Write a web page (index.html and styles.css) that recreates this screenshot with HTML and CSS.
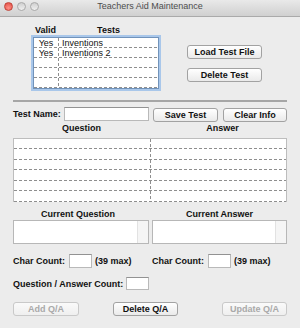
FILE: index.html
```html
<!DOCTYPE html>
<html lang="en">
<head>
  <meta charset="UTF-8" />
  <title>Teachers Aid Maintenance</title>
  <link rel="stylesheet" href="styles.css">
</head>
<body>
  <div class="window">
    <div class="titlebar">
      <div class="lights">
        <span class="light red"></span>
        <span class="light"></span>
        <span class="light"></span>
      </div>
      <div class="title">Teachers Aid Maintenance</div>
      <div></div>
    </div>

    <!-- test list + file buttons -->
    <div class="top">
      <div class="tests">
        <div class="tests-head">
          <span class="head-valid">Valid</span>
          <span class="head-test">Tests</span>
        </div>
        <div class="tests-table">
          <div class="trow"><span class="cell-valid">Yes</span><span class="cell-test">Inventions</span></div>
          <div class="trow"><span class="cell-valid">Yes</span><span class="cell-test">Inventions 2</span></div>
          <div class="trow"><span class="cell-valid"></span><span class="cell-test"></span></div>
          <div class="trow"><span class="cell-valid"></span><span class="cell-test"></span></div>
          <div class="trow"><span class="cell-valid"></span><span class="cell-test"></span></div>
        </div>
      </div>
      <div class="test-buttons">
        <button class="btn">Load Test File</button>
        <button class="btn">Delete Test</button>
      </div>
    </div>

    <div class="separator"></div>

    <div class="lower">
      <div class="name-row">
        <label class="name-label">Test Name:</label>
        <input type="text" class="field name-field" />
        <button class="btn save-btn">Save Test</button>
        <button class="btn clear-btn">Clear Info</button>
      </div>

      <div class="qa-head">
        <span>Question</span>
        <span class="answer-head">Answer</span>
      </div>
      <div class="qa-grid">
        <div class="qa-row"><span></span><span></span></div>
        <div class="qa-row"><span></span><span></span></div>
        <div class="qa-row"><span></span><span></span></div>
        <div class="qa-row"><span></span><span></span></div>
        <div class="qa-row"><span></span><span></span></div>
        <div class="qa-row"><span></span><span></span></div>
      </div>

      <div class="cur-head">
        <span class="cur-q">Current Question</span>
        <span>Current Answer</span>
      </div>
      <div class="cur-boxes">
        <div class="cur-box"><div class="track"></div></div>
        <div class="cur-box"><div class="track"></div></div>
      </div>

      <div class="count-row">
        <div class="count">
          <span>Char Count:</span>
          <input type="text" class="field count-field" />
          <span class="max">(39 max)</span>
        </div>
        <div class="count">
          <span>Char Count:</span>
          <input type="text" class="field count-field" />
          <span class="max">(39 max)</span>
        </div>
      </div>

      <div class="qa-count">
        <span>Question / Answer Count:</span>
        <input type="text" class="field qa-field" />
      </div>

      <div class="bottom-buttons">
        <button class="btn add-btn" disabled>Add Q/A</button>
        <button class="btn del-btn">Delete Q/A</button>
        <button class="btn upd-btn" disabled>Update Q/A</button>
      </div>
    </div>
  </div>
</body>
</html>
```

FILE: styles.css
```css
body {
  margin: 0;
  background-color: #ececec;
  font-family: "Liberation Sans", Arial, sans-serif;
  font-size: 9px;
  color: #111;
}
.window {
  width: 300px;
  height: 328px;
  overflow: hidden;
}

/* title bar */
.titlebar {
  display: grid;
  grid-template-columns: 1fr auto 1fr;
  height: 16px;
  background: linear-gradient(#e9e9e9, #d0d0d0);
  border-bottom: 1px solid #aaa;
}
.lights {
  display: flex;
  gap: 4px;
  padding: 2px 0 0 4px;
}
.light {
  width: 9px;
  height: 9px;
  border-radius: 50%;
  box-sizing: border-box;
  border: 1px solid #a9a9a9;
  background: linear-gradient(#cfcfcf, #f0f0f0);
}
.light.red {
  border-color: #c2443a;
  background: radial-gradient(circle at 50% 70%, #ff9088, #df4a3f);
}
.title {
  line-height: 13px;
  color: #4d4d4d;
}

/* dashed grid lines: short dashes, small gaps */
.trow,
.qa-row {
  background: repeating-linear-gradient(to right, #8e8e8e 0 3px, transparent 3px 5px) left bottom / 100% 1px no-repeat;
}
.cell-valid,
.qa-row span:first-child {
  background: repeating-linear-gradient(to bottom, #8e8e8e 0 3px, transparent 3px 5px) right top / 1px 100% no-repeat;
}

/* tests list */
.top {
  display: flex;
  padding: 8px 0 0 33px;
}
.tests {
  width: 126px;
}
.tests-head {
  display: flex;
  font-weight: bold;
  line-height: 11px;
  height: 11px;
  margin-bottom: 1px;
}
.head-valid {
  width: 25px;
  text-align: center;
}
.head-test {
  flex: 1;
  text-align: center;
}
.tests-table {
  border: 1px solid #7193bb;
  box-shadow: 0 0 0 2px #a9c7ea;
  background-color: #fff;
}
.trow {
  display: flex;
  height: 10px;
  line-height: 10px;
}
.cell-valid {
  width: 25px;
  padding-right: 1px;
  box-sizing: border-box;
  text-align: center;
}
.cell-test {
  padding-left: 3px;
}
.test-buttons {
  display: flex;
  flex-direction: column;
  gap: 9px;
  margin-left: 28px;
  padding-top: 20px;
}
.test-buttons .btn {
  width: 75px;
}

/* buttons and fields */
.btn {
  font-family: inherit;
  font-size: 9px;
  font-weight: bold;
  height: 14px;
  margin: 0;
  padding: 0;
  border: 1px solid #a2a2a2;
  border-radius: 3px;
  background: linear-gradient(#fff, #eaeaea);
  color: #111;
  line-height: 12px;
}
.btn:disabled {
  color: #a9a9a9;
  border-color: #c9c9c9;
  background: linear-gradient(#fafafa, #efefef);
}
.field {
  box-sizing: border-box;
  margin: 0;
  padding: 0;
  border: 1px solid #b9b9b9;
  border-top-color: #929292;
  background-color: #fff;
}

.separator {
  height: 2px;
  background-color: #a6a6a6;
  margin: 11px 13px 0;
}
.lower {
  padding: 0 13px;
  font-weight: bold;
}

.name-row {
  display: flex;
  align-items: flex-start;
  margin-top: 5px;
  height: 15px;
}
.name-label {
  width: 51px;
  line-height: 14px;
}
.name-field {
  width: 85px;
  height: 14px;
}
.save-btn {
  width: 65px;
  margin: 1px 0 0 4px;
}
.clear-btn {
  width: 64px;
  margin: 1px 0 0 5px;
}

/* question / answer grid */
.qa-head {
  display: grid;
  grid-template-columns: 137px 1fr;
  margin-top: 1px;
  line-height: 11px;
  text-align: center;
}
.answer-head {
  padding-left: 8px;
}
.qa-grid {
  margin-top: 4px;
  border: 1px solid #bdbdbd;
  border-bottom: none;
  background-color: #fff;
}
.qa-row {
  display: grid;
  grid-template-columns: 137px 1fr;
  height: 10px;
}
.qa-row:nth-child(even) {
  height: 11px;
}

.cur-head {
  display: grid;
  grid-template-columns: 136px 1fr;
  gap: 3px;
  margin-top: 7px;
  line-height: 11px;
  text-align: center;
}
.cur-q {
  padding-right: 6px;
}
.cur-boxes {
  display: grid;
  grid-template-columns: 136px 1fr;
  gap: 3px;
}
.cur-box {
  display: flex;
  justify-content: flex-end;
  height: 24px;
  box-sizing: border-box;
  border: 1px solid #b7b7b7;
  background-color: #fff;
}
.track {
  width: 10px;
  background-color: #f5f5f5;
  border-left: 1px solid #e2e2e2;
}

/* counts */
.count-row {
  display: grid;
  grid-template-columns: 136px 1fr;
  gap: 3px;
  margin-top: 10px;
}
.count {
  display: flex;
  align-items: center;
}
.count-field {
  width: 23px;
  height: 14px;
  margin: 0 3px 0 4px;
}
.qa-count {
  display: flex;
  align-items: center;
  margin-top: 9px;
}
.qa-field {
  width: 23px;
  height: 13px;
  margin-left: 3px;
}

.bottom-buttons {
  display: flex;
  margin-top: 12px;
}
.add-btn {
  width: 66px;
}
.del-btn {
  width: 65px;
  margin-left: 34px;
}
.upd-btn {
  width: 65px;
  margin-left: auto;
}
```
